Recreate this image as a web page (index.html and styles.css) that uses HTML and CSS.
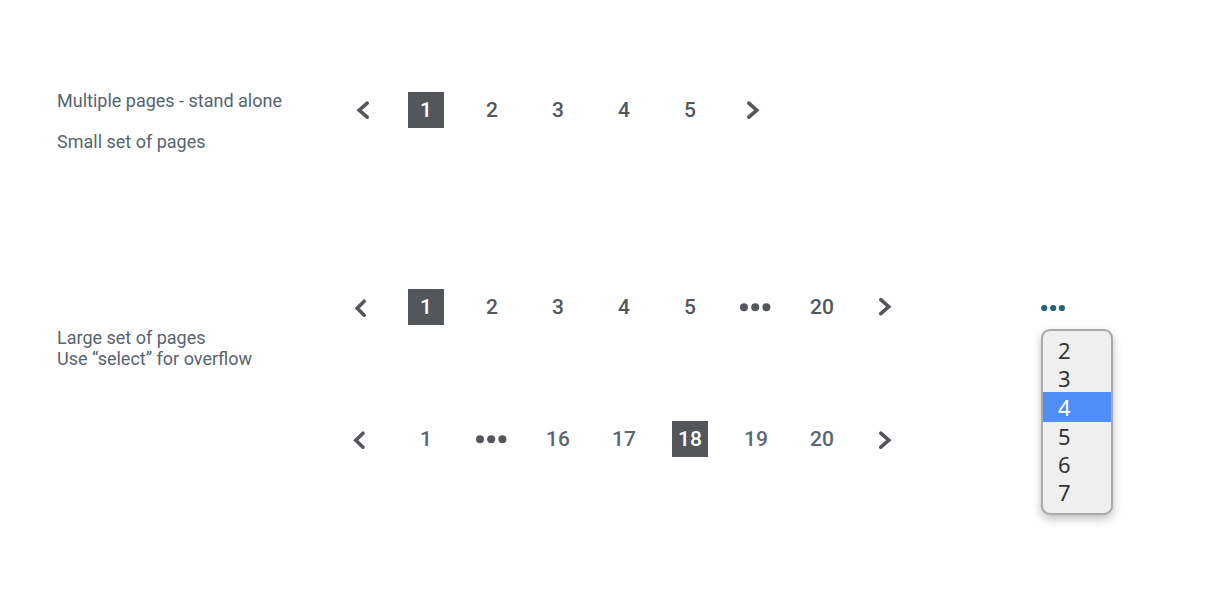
FILE: index.html
```html
<!DOCTYPE html>
<html lang="en">
<head>
<meta charset="utf-8">
<title>Pagination</title>
<link rel="stylesheet" href="styles.css">
</head>
<body>
<main class="page">
  <section class="example">
    <div class="note note-spaced">
      <p>Multiple pages - stand alone</p>
      <p>Small set of pages</p>
    </div>
    <nav class="pagination" aria-label="Small set of pages">
      <button class="cell" aria-label="Previous"><svg class="icon" viewBox="0 0 36 36"><path class="chevron" d="M25.2 11.2 17.2 18.2 25.2 25.2"/></svg></button>
      <a class="cell current" href="#" aria-current="page">1</a>
      <a class="cell" href="#">2</a>
      <a class="cell" href="#">3</a>
      <a class="cell" href="#">4</a>
      <a class="cell" href="#">5</a>
      <button class="cell" aria-label="Next"><svg class="icon" viewBox="0 0 36 36"><path class="chevron" d="M10.8 11.2 18.8 18.2 10.8 25.2"/></svg></button>
    </nav>
  </section>

  <section class="example">
    <div class="note note-low">
      <p>Large set of pages</p>
      <p>Use “select” for overflow</p>
    </div>
    <div class="variants">
      <nav class="pagination" aria-label="Large set, first page">
        <button class="cell" aria-label="Previous"><svg class="icon" viewBox="0 0 36 36"><path class="chevron" d="M22.2 12.2 15.2 19.2 22.2 26.2"/></svg></button>
        <a class="cell current" href="#" aria-current="page">1</a>
        <a class="cell" href="#">2</a>
        <a class="cell" href="#">3</a>
        <a class="cell" href="#">4</a>
        <a class="cell" href="#">5</a>
        <button class="cell" aria-label="More pages"><svg class="icon" viewBox="0 0 36 36"><circle cx="6" cy="18.3" r="4"/><circle cx="17.2" cy="18.3" r="4"/><circle cx="28.4" cy="18.3" r="4"/></svg></button>
        <a class="cell" href="#">20</a>
        <button class="cell" aria-label="Next"><svg class="icon" viewBox="0 0 36 36"><path class="chevron" d="M10.8 10.7 18.8 17.7 10.8 24.7"/></svg></button>
      </nav>
      <nav class="pagination muted" aria-label="Large set, page 18">
        <button class="cell" aria-label="Previous"><svg class="icon" viewBox="0 0 36 36"><path class="chevron" d="M21 12.2 13.8 19.2 21 26.2"/></svg></button>
        <a class="cell" href="#">1</a>
        <button class="cell" aria-label="More pages"><svg class="icon" viewBox="0 0 36 36"><circle cx="6" cy="18.3" r="4"/><circle cx="17.2" cy="18.3" r="4"/><circle cx="28.4" cy="18.3" r="4"/></svg></button>
        <a class="cell" href="#">16</a>
        <a class="cell" href="#">17</a>
        <a class="cell current" href="#" aria-current="page">18</a>
        <a class="cell" href="#">19</a>
        <a class="cell" href="#">20</a>
        <button class="cell" aria-label="Next"><svg class="icon" viewBox="0 0 36 36"><path class="chevron" d="M10.8 12.2 18.8 19.2 10.8 26.2"/></svg></button>
      </nav>
    </div>
    <div class="overflow">
      <button class="trigger" aria-label="Choose a page"><svg class="dots" viewBox="0 0 24 12"><circle cx="3.2" cy="6" r="3.1"/><circle cx="12.2" cy="6" r="3.1"/><circle cx="20.9" cy="6" r="3.1"/></svg></button>
      <select class="menu" size="6" aria-label="Page">
        <option>2</option>
        <option>3</option>
        <option selected>4</option>
        <option>5</option>
        <option>6</option>
        <option>7</option>
      </select>
    </div>
  </section>
</main>
</body>
</html>
```
FILE: styles.css
```css
* {
  box-sizing: border-box;
}

body {
  margin: 0;
  background: #fff;
  color: #53565b;
  font-family: Roboto, "Liberation Sans", sans-serif;
}

p {
  margin: 0;
}

button {
  padding: 0;
  border: 0;
  background: none;
  color: inherit;
  font: inherit;
}

.page {
  display: flex;
  flex-direction: column;
  gap: 135px;
  padding: 90px 93px 72px 57px;
}

.example {
  display: grid;
  grid-template-columns: 285px auto 1fr;
  align-items: start;
}

.note {
  display: grid;
  color: #56646e;
  font-size: 18px;
  line-height: 21px;
}

.note-spaced {
  gap: 20px;
}

.note-low {
  padding-top: 40px;
}

.variants {
  display: grid;
  gap: 94px;
}

.pagination {
  display: flex;
  gap: 30px;
  padding-top: 2px;
}

.cell {
  display: flex;
  align-items: center;
  justify-content: center;
  width: 36px;
  height: 36px;
  color: inherit;
  font-size: 21px;
  font-weight: 500;
  line-height: 26px;
  text-decoration: none;
}

.muted a {
  color: #5b6770;
}

.cell.current {
  background: #53565b;
  color: #fff;
}

.icon {
  width: 36px;
  height: 36px;
  fill: #53565b;
}

.icon .chevron {
  fill: none;
  stroke: #53565b;
  stroke-width: 3.6;
  stroke-linecap: round;
  stroke-linejoin: miter;
}

.overflow {
  display: grid;
  justify-self: end;
  justify-items: start;
  gap: 15px;
  padding-top: 15px;
}

.trigger {
  display: flex;
}

.dots {
  width: 24px;
  height: 12px;
  fill: #23647b;
}

.menu {
  width: 72px;
  height: 186px;
  padding: 5px 0;
  overflow: hidden;
  appearance: none;
  border: 2px solid #a9a9a9;
  border-radius: 9px;
  outline: none;
  background: #efefef;
  box-shadow: 0 4px 10px rgba(0, 0, 0, 0.25);
  color: #333;
  font-family: "Noto Sans", "Open Sans", sans-serif;
  font-size: 22px;
}

.menu option {
  display: flex;
  align-items: center;
  height: 28px;
  min-height: 28px;
  padding: 0 15px;
  line-height: 28px;
}

.menu option:checked {
  height: 30px;
  background: linear-gradient(#4f8ef7, #4f8ef7);
  color: #fff;
}
```
